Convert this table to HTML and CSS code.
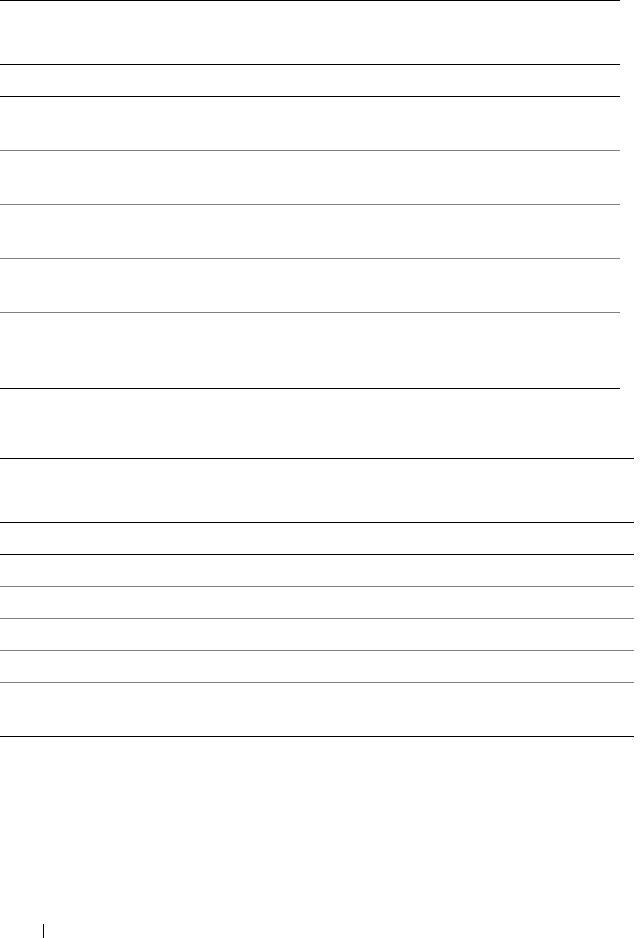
FILE: index.html
```html
<!DOCTYPE html>
<html>
<head>
<meta charset="utf-8">
<link rel="stylesheet" href="styles.css">
</head>
<body>
<div class="table table-a">
  <div class="row h64 dark"></div>
  <div class="row h32 dark"></div>
  <div class="row h54 light"></div>
  <div class="row h54 light"></div>
  <div class="row h54 light"></div>
  <div class="row h54 light"></div>
  <div class="row h76 dark"></div>
</div>
<div class="table table-b">
  <div class="row h64 dark"></div>
  <div class="row h32 dark"></div>
  <div class="row h32 light"></div>
  <div class="row h32 light"></div>
  <div class="row h32 light"></div>
  <div class="row h32 light"></div>
  <div class="row h54 dark"></div>
</div>
<div class="footer"><span class="footer-rule"></span></div>
</body>
</html>
```
FILE: styles.css
```css
html, body {
  margin: 0;
  padding: 0;
  background: #ffffff;
  font-family: "Liberation Sans", Arial, sans-serif;
}
.table {
  display: flex;
  flex-direction: column;
  border-top: 1px solid #000000;
}
.table-a {
  width: 620px;
}
.table-b {
  width: 634px;
  margin-top: 69px;
}
.row {
  box-sizing: border-box;
  border-bottom: 1px solid #000000;
}
.row.light {
  border-bottom-color: #808080;
}
.h32 { height: 32px; }
.h54 { height: 54px; }
.h64 { height: 64px; }
.h76 { height: 76px; }
.footer {
  margin-top: 187px;
  padding-left: 43px;
  display: flex;
}
.footer-rule {
  width: 1px;
  height: 14px;
  background: #000000;
}
```
